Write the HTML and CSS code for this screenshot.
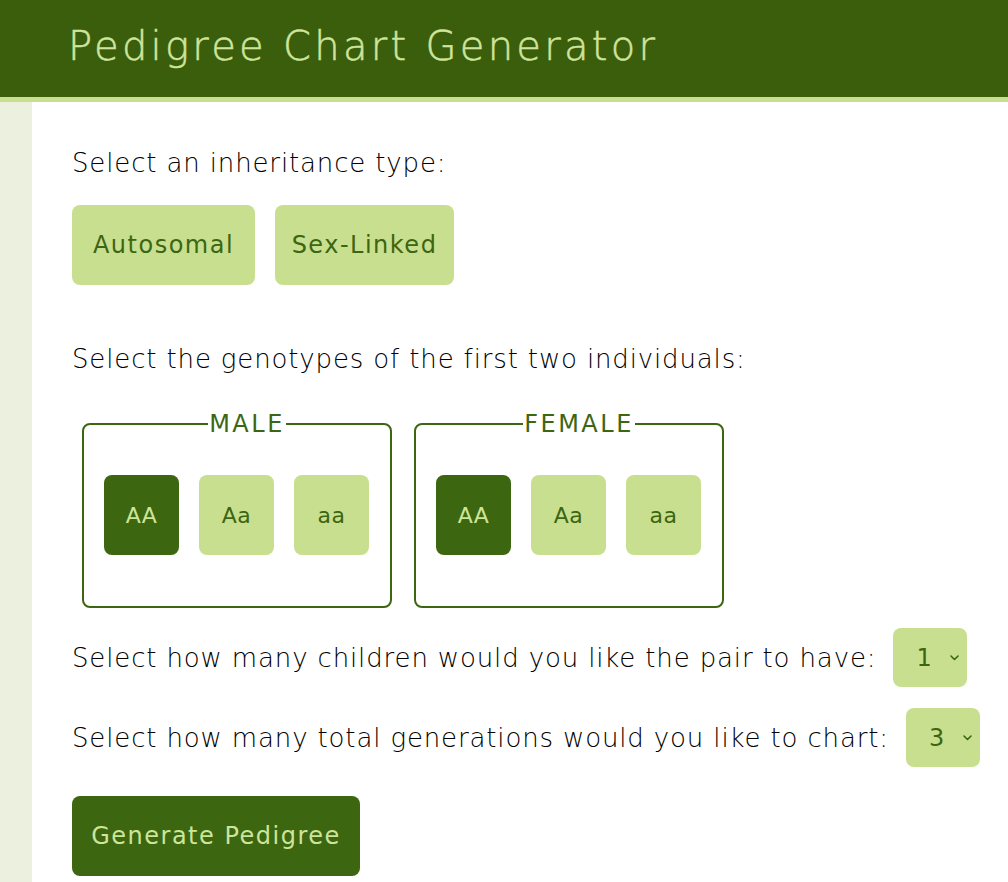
FILE: index.html
```html
<!DOCTYPE html>
<html lang="en">
<head>
<meta charset="utf-8">
<title>Pedigree Chart Generator</title>
<link rel="stylesheet" href="styles.css">
</head>
<body>
<header class="site-header">
  <h1 class="site-title">Pedigree Chart Generator</h1>
</header>
<div class="layout">
  <aside class="sidebar"></aside>
  <main class="content">
    <p class="prompt prompt-first">Select an inheritance type:</p>
    <div class="btn-row">
      <button class="btn btn-light btn-type">Autosomal</button>
      <button class="btn btn-light btn-type">Sex-Linked</button>
    </div>

    <p class="prompt prompt-geno">Select the genotypes of the first two individuals:</p>
    <div class="geno-row">
      <fieldset class="geno-box">
        <legend class="geno-legend">MALE</legend>
        <div class="geno-buttons">
          <button class="btn btn-dark btn-geno">AA</button>
          <button class="btn btn-light btn-geno">Aa</button>
          <button class="btn btn-light btn-geno">aa</button>
        </div>
      </fieldset>
      <fieldset class="geno-box">
        <legend class="geno-legend">FEMALE</legend>
        <div class="geno-buttons">
          <button class="btn btn-dark btn-geno">AA</button>
          <button class="btn btn-light btn-geno">Aa</button>
          <button class="btn btn-light btn-geno">aa</button>
        </div>
      </fieldset>
    </div>

    <div class="select-line select-line-first">
      <span class="prompt-inline">Select how many children would you like the pair to have:</span>
      <span class="select-wrap">
        <select class="select"><option>1</option><option>2</option><option>3</option></select>
        <svg class="chev" width="9" height="6" viewBox="0 0 9 6"><path d="M1 1l3.5 3.5L8 1" fill="none" stroke="#3d6611" stroke-width="1.6" stroke-linecap="round" stroke-linejoin="round"/></svg>
      </span>
    </div>
    <div class="select-line">
      <span class="prompt-inline">Select how many total generations would you like to chart:</span>
      <span class="select-wrap">
        <select class="select"><option>2</option><option selected>3</option><option>4</option></select>
        <svg class="chev" width="9" height="6" viewBox="0 0 9 6"><path d="M1 1l3.5 3.5L8 1" fill="none" stroke="#3d6611" stroke-width="1.6" stroke-linecap="round" stroke-linejoin="round"/></svg>
      </span>
    </div>

    <button class="btn btn-dark btn-generate">Generate Pedigree</button>
  </main>
</div>
</body>
</html>
```

FILE: styles.css
```css
html, body {
  margin: 0;
  padding: 0;
  background: #ffffff;
}
body {
  font-family: "DejaVu Sans", "Liberation Sans", sans-serif;
  color: #000000;
}
.site-header {
  background: #3b5e0c;
  height: 97px;
  border-bottom: 5px solid #c9df8f;
  display: flex;
  align-items: center;
  padding-left: 68px;
  box-sizing: content-box;
}
.site-title {
  margin: 0;
  font-family: "DejaVu Sans", sans-serif;
  font-weight: 200;
  font-size: 40px;
  letter-spacing: 3.3px;
  color: #cfe59c;
  line-height: 1;
  padding-bottom: 6px;
  -webkit-text-stroke: 0.5px #cfe59c;
}
.layout {
  display: flex;
  min-height: 780px;
}
.sidebar {
  width: 32px;
  flex: none;
  background: #ecf0df;
}
.content {
  flex: 1;
  padding-left: 40px;
  padding-top: 1px;
}
.prompt,
.prompt-inline {
  font-size: 26px;
  font-weight: 200;
  letter-spacing: 0.86px;
  line-height: 36px;
  color: #000000;
}
.prompt {
  margin: 0;
}
.prompt-first {
  margin-top: 42px;
}
.btn-row {
  display: flex;
  gap: 20px;
  margin-top: 24px;
}
.btn {
  border: none;
  border-radius: 8px;
  font-family: "DejaVu Sans", sans-serif;
  font-weight: 400;
  font-size: 24px;
  letter-spacing: 1.5px;
  cursor: pointer;
  padding: 0;
}
.btn-light {
  background: #c9df90;
  color: #3d6611;
}
.btn-dark {
  background: #3d6611;
  color: #cde59a;
}
.btn-type {
  height: 80px;
  width: 183px;
}
.btn-type + .btn-type {
  width: 179px;
}
.prompt-geno {
  margin-top: 56px;
}
.geno-row {
  display: flex;
  gap: 22px;
  margin-top: 32px;
  margin-left: 10px;
}
.geno-box {
  margin: 0;
  width: 310px;
  box-sizing: border-box;
  height: 199px;
  border: 2px solid #3d6611;
  border-radius: 8px;
  padding: 36px 10px 0 30px;
}
.geno-legend {
  margin: 0 auto;
  padding: 0 1px;
  font-size: 24px;
  font-weight: 400;
  letter-spacing: 2.5px;
  color: #3d6611;
  line-height: 30px;
}
.geno-buttons {
  display: flex;
  gap: 20px;
  margin-left: -10px;
}
.btn-geno {
  width: 75px;
  height: 80px;
  font-size: 22px;
  letter-spacing: 0.5px;
}
.select-line {
  display: flex;
  align-items: center;
  gap: 17px;
  margin-top: 21px;
}
.select-line-first {
  margin-top: 20px;
}
.select-wrap {
  position: relative;
  display: inline-block;
}
.select {
  appearance: none;
  -webkit-appearance: none;
  border: none;
  border-radius: 8px;
  background: #c9df90;
  color: #3d6611;
  width: 74px;
  height: 59px;
  padding: 0 0 0 23px;
  font-family: "DejaVu Sans", sans-serif;
  font-size: 24px;
  font-weight: 400;
}
.chev {
  position: absolute;
  right: 8px;
  top: 27px;
  pointer-events: none;
}
.btn-generate {
  margin-top: 29px;
  width: 288px;
  height: 80px;
}
```
